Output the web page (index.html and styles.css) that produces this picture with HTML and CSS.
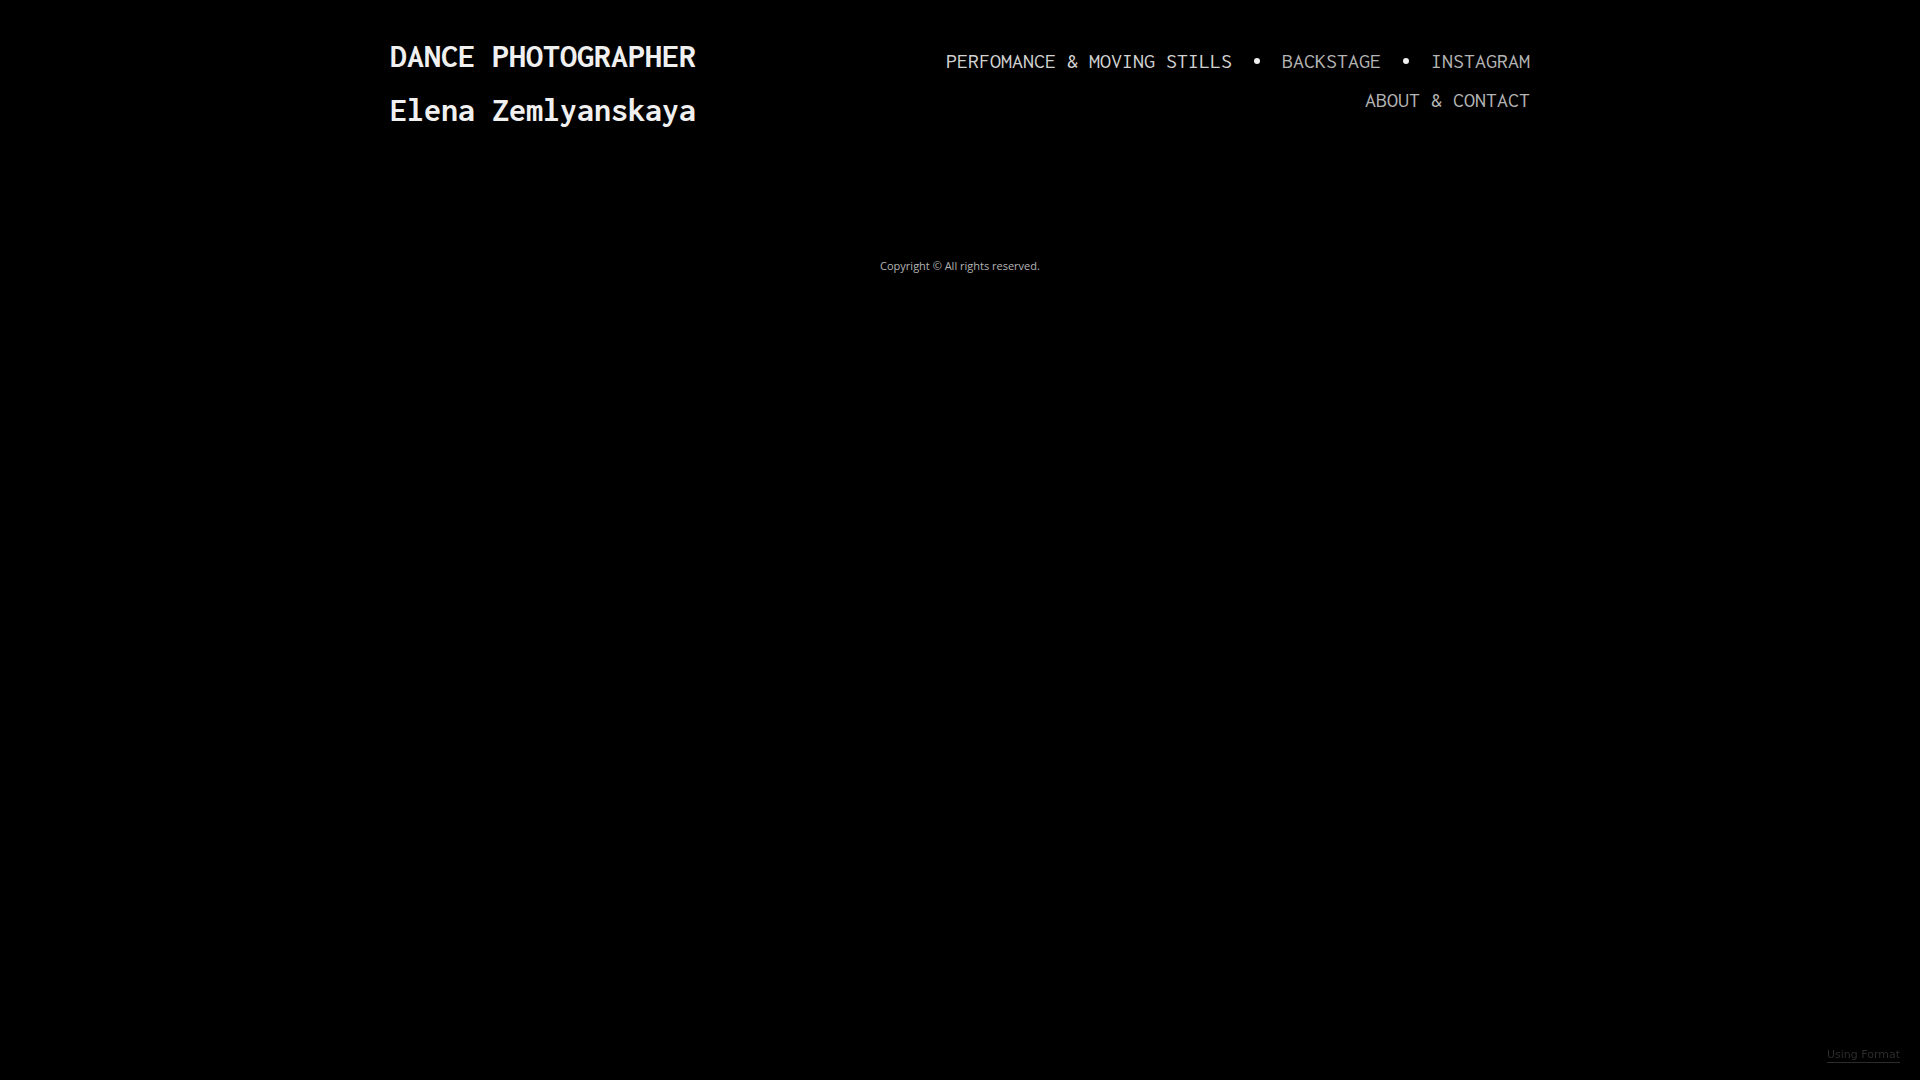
FILE: index.html
```html
<!DOCTYPE html>
<html lang="en">

<head>
  <meta charset="UTF-8">
  <meta name="viewport" content="width=device-width, initial-scale=1.0">
  <title>Dance Photographer Elena Zemlyanskaya</title>
  <link rel="stylesheet" href="styles.css">
</head>

<body>
  <header class="site-header">
    <h1 class="logo"><a href="#">DANCE PHOTOGRAPHER<br>Elena Zemlyanskaya</a></h1>
    <nav class="main-nav">
      <ul>
        <li><a class="active" href="#">PERFOMANCE &amp; MOVING STILLS</a></li>
        <li><a href="#">BACKSTAGE</a></li>
        <li><a href="#">INSTAGRAM</a></li>
        <li><a href="#">ABOUT &amp; CONTACT</a></li>
      </ul>
    </nav>
  </header>

  <footer class="site-footer">Copyright © All rights reserved.</footer>

  <a class="format-link" href="#">Using Format</a>
</body>

</html>
```
FILE: styles.css
```css
body {
  margin: 0;
  background: #000;
  color: #f0f0f0;
  font-family: Inconsolata, "DejaVu Sans Mono", monospace;
}

a {
  color: inherit;
  text-decoration: none;
}

.site-header {
  display: flex;
  justify-content: space-between;
  align-items: flex-start;
  max-width: 1140px;
  margin: 0 auto;
  padding: 29px 20px 0;
}

.logo {
  margin: 0;
  font-size: 34px;
  line-height: 54px;
}

.main-nav {
  max-width: 640px;
  padding-top: 12px;
}

.main-nav ul {
  display: flex;
  flex-wrap: wrap;
  justify-content: flex-end;
  margin: 0;
  padding: 0;
  list-style: none;
}

.main-nav li {
  display: flex;
  align-items: center;
  color: #b4b4b4;
  font-size: 22px;
  line-height: 39px;
}

.main-nav li:nth-child(-n+2)::after {
  content: "";
  width: 6px;
  height: 6px;
  margin: 0 22px;
  border-radius: 50%;
  background: #f0f0f0;
}

.main-nav a:hover,
.main-nav .active {
  color: #d2d2d2;
}

.site-footer {
  margin-top: 117px;
  color: #b4b4b4;
  font-family: "Open Sans", Arial, sans-serif;
  font-size: 11px;
  line-height: 24px;
  text-align: center;
}

/* badge stays in the window corner */
.format-link {
  position: fixed;
  right: 20px;
  bottom: 17px;
  border-bottom: 1px solid #2c2c2c;
  color: #2c2c2c;
  font-family: "DejaVu Sans", Verdana, sans-serif;
  font-size: 11px;
  line-height: 14px;
}

@media (max-width: 900px) {
  .site-header {
    flex-direction: column;
    align-items: center;
    text-align: center;
  }

  .main-nav ul {
    justify-content: center;
  }
}
```
